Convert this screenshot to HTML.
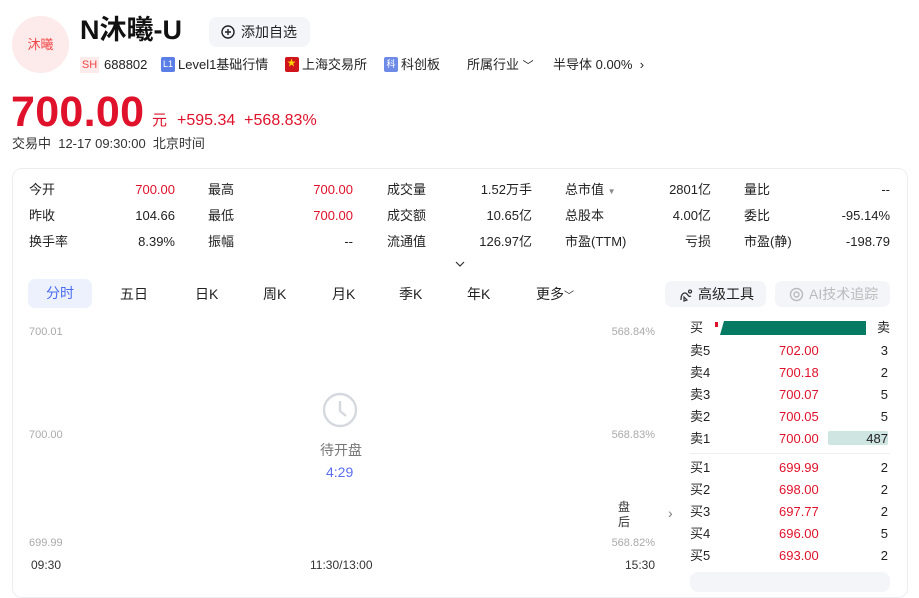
<!DOCTYPE html>
<html><head><meta charset="utf-8"><style>
*{margin:0;padding:0;box-sizing:border-box}
body{width:919px;height:580px;overflow:hidden;background:#fff;font-family:"Liberation Sans","Noto Sans CJK SC",sans-serif;color:#222;position:relative}
.a{position:absolute;white-space:nowrap}
.r{color:#e0112b}
.g{color:#aaa}
.s{font-size:13px}
.rt{text-align:right}
</style></head><body>
<div class="a" style="left:12px;top:16px;width:57px;height:57px;border-radius:50%;background:#fdeaea;color:#f04848;font-size:13px;line-height:57px;text-align:center">沐曦</div>
<div class="a" style="left:80px;top:12px;font-size:27px;font-weight:bold;color:#111;line-height:36px">N沐曦-U</div>
<div class="a" style="left:209px;top:17px;width:101px;height:30px;border-radius:8px;background:#f3f5f9;font-size:14px;line-height:30px;padding-left:32px">添加自选</div>
<svg class="a" style="left:221px;top:25px" width="14" height="14"><circle cx="7" cy="7" r="6" fill="none" stroke="#222" stroke-width="1.4"/><path d="M7 4v6M4 7h6" stroke="#222" stroke-width="1.4"/></svg>

<div class="a" style="left:80px;top:57px;width:19px;height:16px;background:#fdeaea;color:#f04848;font-size:11px;line-height:16px;text-align:center">SH</div>
<div class="a s" style="left:104px;top:56px;line-height:18px">688802</div>
<div class="a" style="left:161px;top:57px;width:14px;height:15px;background:#5b7ee6;border-radius:2px;color:#fff;font-size:9px;line-height:15px;text-align:center">L1</div>
<div class="a s" style="left:178px;top:56px;line-height:18px">Level1基础行情</div>
<div class="a" style="left:285px;top:57px;width:14px;height:15px;background:#d0141c;border-radius:2px;color:#ffd400;font-size:9px;line-height:13px;padding-left:2px">★</div>
<div class="a s" style="left:302px;top:56px;line-height:18px">上海交易所</div>
<div class="a" style="left:384px;top:57px;width:14px;height:15px;background:#6d8ae6;border-radius:2px;color:#fff;font-size:9px;line-height:15px;text-align:center">科</div>
<div class="a s" style="left:401px;top:56px;line-height:18px">科创板</div>
<div class="a s" style="left:467px;top:56px;line-height:18px">所属行业 <span style="font-size:11px">﹀</span></div>
<div class="a s" style="left:553px;top:56px;line-height:18px">半导体 0.00% &nbsp;›</div>

<div class="a r" style="left:11px;top:88px;font-size:43px;font-weight:bold;line-height:49px;letter-spacing:0.3px">700.00</div>
<div class="a r" style="left:152px;top:112px;font-size:15px;line-height:18px">元</div>
<div class="a r" style="left:177px;top:111px;font-size:16px;line-height:20px">+595.34 &nbsp;+568.83%</div>
<div class="a s" style="left:12px;top:135px;line-height:18px;color:#333">交易中 &nbsp;12-17 09:30:00 &nbsp;北京时间</div>

<div class="a" style="left:12px;top:168px;width:896px;height:430px;border:1px solid #ebedf0;border-radius:10px"></div>

<div class="a s" style="left:29px;top:181px;line-height:18px">今开</div><div class="a s rt r" style="left:95px;width:80px;top:181px;line-height:18px">700.00</div>
<div class="a s" style="left:208px;top:181px;line-height:18px">最高</div><div class="a s rt r" style="left:273px;width:80px;top:181px;line-height:18px">700.00</div>
<div class="a s" style="left:387px;top:181px;line-height:18px">成交量</div><div class="a s rt" style="left:452px;width:80px;top:181px;line-height:18px">1.52万手</div>
<div class="a s" style="left:565px;top:181px;line-height:18px">总市值 <span style="font-size:8px;color:#888">▼</span></div><div class="a s rt" style="left:631px;width:80px;top:181px;line-height:18px">2801亿</div>
<div class="a s" style="left:744px;top:181px;line-height:18px">量比</div><div class="a s rt" style="left:810px;width:80px;top:181px;line-height:18px">--</div>

<div class="a s" style="left:29px;top:207px;line-height:18px">昨收</div><div class="a s rt" style="left:95px;width:80px;top:207px;line-height:18px">104.66</div>
<div class="a s" style="left:208px;top:207px;line-height:18px">最低</div><div class="a s rt r" style="left:273px;width:80px;top:207px;line-height:18px">700.00</div>
<div class="a s" style="left:387px;top:207px;line-height:18px">成交额</div><div class="a s rt" style="left:452px;width:80px;top:207px;line-height:18px">10.65亿</div>
<div class="a s" style="left:565px;top:207px;line-height:18px">总股本</div><div class="a s rt" style="left:631px;width:80px;top:207px;line-height:18px">4.00亿</div>
<div class="a s" style="left:744px;top:207px;line-height:18px">委比</div><div class="a s rt" style="left:810px;width:80px;top:207px;line-height:18px">-95.14%</div>

<div class="a s" style="left:29px;top:233px;line-height:18px">换手率</div><div class="a s rt" style="left:95px;width:80px;top:233px;line-height:18px">8.39%</div>
<div class="a s" style="left:208px;top:233px;line-height:18px">振幅</div><div class="a s rt" style="left:273px;width:80px;top:233px;line-height:18px">--</div>
<div class="a s" style="left:387px;top:233px;line-height:18px">流通值</div><div class="a s rt" style="left:452px;width:80px;top:233px;line-height:18px">126.97亿</div>
<div class="a s" style="left:565px;top:233px;line-height:18px">市盈(TTM)</div><div class="a s rt" style="left:631px;width:80px;top:233px;line-height:18px">亏损</div>
<div class="a s" style="left:744px;top:233px;line-height:18px">市盈(静)</div><div class="a s rt" style="left:810px;width:80px;top:233px;line-height:18px">-198.79</div>
<svg class="a" style="left:454px;top:260px" width="12" height="8"><path d="M2 2l4 4 4-4" fill="none" stroke="#333" stroke-width="1.2"/></svg>

<div class="a" style="left:28px;top:279px;width:64px;height:29px;border-radius:7px;background:#edf1fd;color:#4a6cf0;font-size:14px;line-height:29px;text-align:center">分时</div>
<div class="a" style="left:120px;top:285px;font-size:14px;line-height:18px">五日</div>
<div class="a" style="left:195px;top:285px;font-size:14px;line-height:18px">日K</div>
<div class="a" style="left:263px;top:285px;font-size:14px;line-height:18px">周K</div>
<div class="a" style="left:332px;top:285px;font-size:14px;line-height:18px">月K</div>
<div class="a" style="left:399px;top:285px;font-size:14px;line-height:18px">季K</div>
<div class="a" style="left:467px;top:285px;font-size:14px;line-height:18px">年K</div>
<div class="a" style="left:536px;top:285px;font-size:14px;line-height:18px">更多<span style="font-size:10px">﹀</span></div>
<div class="a" style="left:665px;top:281px;width:101px;height:26px;border-radius:7px;background:#f3f5f9;font-size:14px;line-height:26px;padding-left:33px">高级工具</div>
<svg class="a" style="left:678px;top:287px" width="15" height="15"><path d="M3 13c0-4 1-7 4-7s3 5 6 3M12 3a1.5 1.5 0 1 0 .1 0" fill="none" stroke="#333" stroke-width="1.3"/><path d="M6 10l3 3-3 1z" fill="none" stroke="#333" stroke-width="1.2"/></svg>
<div class="a" style="left:775px;top:281px;width:115px;height:26px;border-radius:7px;background:#f3f5f9;color:#bbb;font-size:14px;line-height:26px;padding-left:34px">AI技术追踪</div>
<svg class="a" style="left:789px;top:287px" width="15" height="15"><circle cx="7.5" cy="7.5" r="6" fill="none" stroke="#bbb" stroke-width="1.4"/><circle cx="7.5" cy="7.5" r="2.5" fill="none" stroke="#bbb" stroke-width="1.4"/></svg>

<div class="a g" style="left:29px;top:325px;font-size:11px;line-height:14px">700.01</div>
<div class="a g" style="left:29px;top:428px;font-size:11px;line-height:14px">700.00</div>
<div class="a g" style="left:29px;top:536px;font-size:11px;line-height:14px">699.99</div>
<div class="a g rt" style="left:590px;width:65px;top:325px;font-size:11px;line-height:14px">568.84%</div>
<div class="a g rt" style="left:590px;width:65px;top:428px;font-size:11px;line-height:14px">568.83%</div>
<div class="a g rt" style="left:590px;width:65px;top:536px;font-size:11px;line-height:14px">568.82%</div>
<div class="a" style="left:31px;top:558px;font-size:12px;line-height:14px;color:#333">09:30</div>
<div class="a" style="left:310px;top:558px;font-size:12px;line-height:14px;color:#333">11:30/13:00</div>
<div class="a rt" style="left:600px;width:55px;top:558px;font-size:12px;line-height:14px;color:#333">15:30</div>
<svg class="a" style="left:322px;top:392px" width="36" height="36"><circle cx="18" cy="18" r="16" fill="none" stroke="#d5d8de" stroke-width="2.4"/><path d="M18 9v10l6 5" fill="none" stroke="#d5d8de" stroke-width="2.4"/></svg>
<div class="a" style="left:320px;top:441px;font-size:14px;line-height:18px;color:#777">待开盘</div>
<div class="a" style="left:326px;top:463px;font-size:14px;line-height:18px;color:#5b6ef0">4:29</div>
<div class="a" style="left:618px;top:500px;font-size:12px;line-height:15px;color:#333;width:14px;white-space:normal">盘后</div>
<div class="a" style="left:668px;top:505px;font-size:14px;color:#777">›</div>

<div class="a" style="left:690px;top:319px;font-size:13px;line-height:17px">买</div>
<div class="a" style="left:715px;top:322px;width:3px;height:5px;background:#e0112b"></div>
<div class="a" style="left:720px;top:321px;width:146px;height:14px;background:#077a63;clip-path:polygon(4px 0,100% 0,100% 100%,0 100%)"></div>
<div class="a" style="left:877px;top:319px;font-size:13px;line-height:17px">卖</div>

<div class="a" style="left:828px;top:431px;width:60px;height:14px;background:#cfe5e1;border-radius:2px"></div>
<div class="a" style="left:690px;top:453px;width:200px;height:1px;background:#eee"></div>
<div class="a" style="left:690px;top:572px;width:200px;height:20px;border-radius:8px;background:#f3f5f9"></div>

<div class="a s" style="left:690px;top:342px;line-height:17px">卖5</div><div class="a s r" style="left:779px;top:342px;line-height:17px">702.00</div><div class="a s rt" style="left:840px;width:48px;top:342px;line-height:17px">3</div>
<div class="a s" style="left:690px;top:364px;line-height:17px">卖4</div><div class="a s r" style="left:779px;top:364px;line-height:17px">700.18</div><div class="a s rt" style="left:840px;width:48px;top:364px;line-height:17px">2</div>
<div class="a s" style="left:690px;top:386px;line-height:17px">卖3</div><div class="a s r" style="left:779px;top:386px;line-height:17px">700.07</div><div class="a s rt" style="left:840px;width:48px;top:386px;line-height:17px">5</div>
<div class="a s" style="left:690px;top:408px;line-height:17px">卖2</div><div class="a s r" style="left:779px;top:408px;line-height:17px">700.05</div><div class="a s rt" style="left:840px;width:48px;top:408px;line-height:17px">5</div>
<div class="a s" style="left:690px;top:430px;line-height:17px">卖1</div><div class="a s r" style="left:779px;top:430px;line-height:17px">700.00</div><div class="a s rt" style="left:840px;width:48px;top:430px;line-height:17px">487</div>
<div class="a s" style="left:690px;top:459px;line-height:17px">买1</div><div class="a s r" style="left:779px;top:459px;line-height:17px">699.99</div><div class="a s rt" style="left:840px;width:48px;top:459px;line-height:17px">2</div>
<div class="a s" style="left:690px;top:481px;line-height:17px">买2</div><div class="a s r" style="left:779px;top:481px;line-height:17px">698.00</div><div class="a s rt" style="left:840px;width:48px;top:481px;line-height:17px">2</div>
<div class="a s" style="left:690px;top:503px;line-height:17px">买3</div><div class="a s r" style="left:779px;top:503px;line-height:17px">697.77</div><div class="a s rt" style="left:840px;width:48px;top:503px;line-height:17px">2</div>
<div class="a s" style="left:690px;top:525px;line-height:17px">买4</div><div class="a s r" style="left:779px;top:525px;line-height:17px">696.00</div><div class="a s rt" style="left:840px;width:48px;top:525px;line-height:17px">5</div>
<div class="a s" style="left:690px;top:547px;line-height:17px">买5</div><div class="a s r" style="left:779px;top:547px;line-height:17px">693.00</div><div class="a s rt" style="left:840px;width:48px;top:547px;line-height:17px">2</div>
</body></html>
